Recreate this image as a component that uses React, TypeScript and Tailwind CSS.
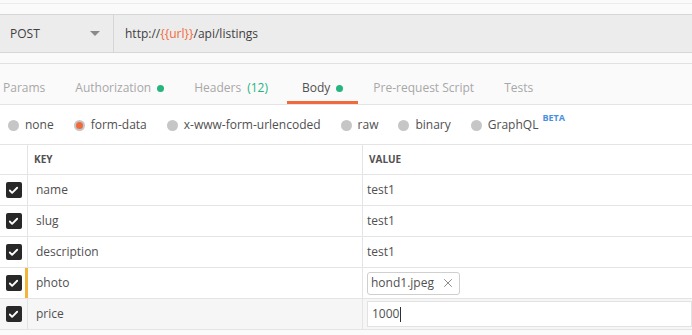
import { Check, X } from "lucide-react";

const font = { fontFamily: '"Open Sans", "Liberation Sans", sans-serif' };

function Radio({ label, active }: { label: string; active?: boolean }) {
  return (
    <div className="flex items-center gap-[6px]">
      <span className="flex h-[11px] w-[11px] items-center justify-center rounded-full bg-[#c6c6c6]">
        {active && <span className="h-[7px] w-[7px] rounded-full bg-[#ef6b3c]" />}
      </span>
      <span className="text-[12px] text-[#505050]">{label}</span>
    </div>
  );
}

function Row({ k, children, marked, shaded }: { k: string; children: React.ReactNode; marked?: boolean; shaded?: boolean }) {
  return (
    <div className={`flex h-[31px] border-b border-[#e4e4e4] ${shaded ? "bg-[#f6f6f6]" : "bg-white"}`}>
      <div className="relative flex w-[28px] items-center justify-center border-r border-[#e4e4e4]">
        <span className="flex h-[16px] w-[16px] items-center justify-center rounded-[2px] bg-[#282828]">
          <Check className="h-[11px] w-[11px] text-white" strokeWidth={4} />
        </span>
        {marked && <span className="absolute right-[-1px] top-0 h-full w-[3px] bg-[#f2b43a]" />}
      </div>
      <div className="flex w-[335px] items-center border-r border-[#e4e4e4] pl-[8px] text-[12px] text-[#505050]">{k}</div>
      <div className="flex flex-1 items-center pl-[4px] text-[12px] text-[#505050]">{children}</div>
    </div>
  );
}

export default function App() {
  return (
    <div className="h-[335px] w-[692px] overflow-hidden bg-[#fafafa]" style={font}>
      <div className="h-[14px] border-t-[3px] border-t-[#fafafa]">
        <div className="h-px bg-[#ececec]" />
      </div>
      <div className="flex h-[39px] border-y border-[#d6d6d6] bg-[#ececec]">
        <div className="flex w-[114px] items-center justify-between border-r border-[#d6d6d6] pl-[10px] pr-[13px]">
          <span className="text-[12px] text-[#404040]">POST</span>
          <span className="h-0 w-0 border-x-[5px] border-t-[5px] border-x-transparent border-t-[#8a8a8a]" />
        </div>
        <div className="flex items-center pl-[11px] text-[12px] text-[#404040]">
          http://<span className="text-[#ef6b3c]">{"{{url}}"}</span>/api/listings
        </div>
      </div>
      <div className="h-[11px] border-b border-[#e2e2e2]" />
      <div className="flex h-[41px] items-stretch border-b border-[#e4e4e4] text-[12px] text-[#a8a8a8]">
        <div className="-ml-[12px] flex items-center px-[15px] pt-[8px]">Params</div>
        <div className="flex items-center gap-[6px] px-[15px] pt-[8px]">
          Authorization<span className="h-[7px] w-[7px] rounded-full bg-[#26b47f]" />
        </div>
        <div className="flex items-center gap-[6px] px-[15px] pt-[8px]">
          Headers<span className="text-[#26b47f]">(12)</span>
        </div>
        <div className="ml-[4px] flex items-center gap-[6px] border-b-[3px] border-[#ef6b3c] px-[15px] pt-[11px] text-[#505050]">
          Body<span className="h-[7px] w-[7px] rounded-full bg-[#26b47f]" />
        </div>
        <div className="flex items-center px-[15px] pt-[8px]">Pre-request Script</div>
        <div className="flex items-center px-[15px] pt-[8px]">Tests</div>
      </div>
      <div className="flex h-[40px] items-center gap-[20px] border-b border-[#e4e4e4] bg-white pl-[8px] pt-[1px]">
        <Radio label="none" />
        <Radio label="form-data" active />
        <Radio label="x-www-form-urlencoded" />
        <Radio label="raw" />
        <Radio label="binary" />
        <div className="flex items-start gap-[4px]">
          <Radio label="GraphQL" />
          <span className="-mt-[5px] text-[9px] font-bold text-[#4a90e2]">BETA</span>
        </div>
      </div>
      <div className="flex h-[30px] border-b border-[#e4e4e4] bg-white text-[10px] font-bold text-[#505050]">
        <div className="w-[28px] border-r border-[#e4e4e4]" />
        <div className="flex w-[335px] items-end border-r border-[#e4e4e4] pb-[7px] pl-[6px]">KEY</div>
        <div className="flex items-end pb-[7px] pl-[6px]">VALUE</div>
      </div>
      <Row k="name">test1</Row>
      <Row k="slug">test1</Row>
      <Row k="description">test1</Row>
      <Row k="photo" marked>
        <span className="flex h-[23px] items-center gap-[7px] rounded-[3px] border border-[#cfcfcf] pl-[3px] pr-[4px]">
          hond1.jpeg
          <X className="h-[14px] w-[14px] text-[#707070]" strokeWidth={1.4} />
        </span>
      </Row>
      <Row k="price" shaded>
        <span className="flex h-[26px] flex-1 items-center border border-[#e2e2e2] bg-white pl-[4px]">
          1000<span className="ml-px h-[15px] w-px bg-[#303030]" />
        </span>
      </Row>
    </div>
  );
}
